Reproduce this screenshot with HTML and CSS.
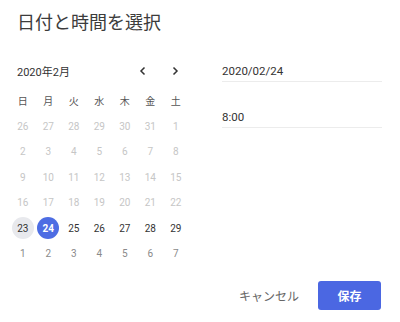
FILE: index.html
```html
<!DOCTYPE html>
<html>
<head>
  <meta charset="UTF-8">
  <title>日付と時間を選択</title>
<link rel="stylesheet" href="styles.css">
</head>
<body>
  <div class="dialog">
    <h1 class="title">日付と時間を選択</h1>

    <div class="main">
      <!-- カレンダー -->
      <div class="calendar">
        <div class="cal-head">
          <span class="month">2020年2月</span>
          <div class="nav">
            <button class="nav-btn" aria-label="前の月">
              <svg width="8" height="10" viewBox="0 0 8 10"><path d="M5.5 1.5 2 5l3.5 3.5" fill="none" stroke="#333" stroke-width="1.5"/></svg>
            </button>
            <button class="nav-btn" aria-label="次の月">
              <svg width="8" height="10" viewBox="0 0 8 10"><path d="M2.5 1.5 6 5 2.5 8.5" fill="none" stroke="#333" stroke-width="1.5"/></svg>
            </button>
          </div>
        </div>
        <div class="grid" id="grid">
          <span class="wd">日</span><span class="wd">月</span><span class="wd">火</span><span class="wd">水</span><span class="wd">木</span><span class="wd">金</span><span class="wd">土</span>
        </div>
      </div>

      <!-- 入力欄 -->
      <div class="fields">
        <div class="field">2020/02/24</div>
        <div class="field">8:00</div>
      </div>
    </div>

    <div class="footer">
      <button class="btn-cancel">キャンセル</button>
      <button class="btn-save">保存</button>
    </div>
  </div>

<script>
  const grid = document.getElementById('grid');
  // 表示する日付（前月・当月・翌月）
  const days = [
    [26, 'off'], [27, 'off'], [28, 'off'], [29, 'off'], [30, 'off'], [31, 'off'], [1, 'off'],
    [2, 'off'], [3, 'off'], [4, 'off'], [5, 'off'], [6, 'off'], [7, 'off'], [8, 'off'],
    [9, 'off'], [10, 'off'], [11, 'off'], [12, 'off'], [13, 'off'], [14, 'off'], [15, 'off'],
    [16, 'off'], [17, 'off'], [18, 'off'], [19, 'off'], [20, 'off'], [21, 'off'], [22, 'off'],
    [23, 'today'], [24, 'selected'], [25, ''], [26, ''], [27, ''], [28, ''], [29, ''],
    [1, 'next'], [2, 'next'], [3, 'next'], [4, 'next'], [5, 'next'], [6, 'next'], [7, 'next']
  ];
  days.forEach(([d, cls]) => {
    const cell = document.createElement('span');
    cell.className = 'day ' + cls;
    const inner = document.createElement('span');
    inner.textContent = d;
    cell.appendChild(inner);
    grid.appendChild(cell);
  });
</script>
</body>
</html>
```

FILE: styles.css
```css
body, html {
  margin: 0;
  padding: 0;
  background: white;
  font-family: Roboto, "Noto Sans CJK JP", sans-serif;
  color: #333;
}
.dialog {
  padding: 9px 18px 0 10px;
}
.title {
  margin: 0 0 21px 7px;
  font-size: 18px;
  font-weight: 400;
  line-height: 28px;
  color: #3c3c3c;
}
.main {
  display: flex;
  gap: 33px;
}
.calendar {
  width: 179px;
}
.cal-head {
  display: flex;
  align-items: center;
  justify-content: space-between;
  height: 26px;
  margin-bottom: 4px;
}
.month {
  padding-left: 7px;
  font-size: 11px;
  color: #333;
}
.nav {
  display: flex;
  gap: 22px;
  margin-right: 9px;
}
.nav-btn {
  padding: 0;
  border: none;
  background: none;
  width: 10px;
  height: 12px;
  display: flex;
  align-items: center;
  justify-content: center;
}
.grid {
  display: grid;
  grid-template-columns: repeat(7, 25.5px);
  grid-auto-rows: 25.5px;
}
.wd, .day {
  display: flex;
  align-items: center;
  justify-content: center;
  font-size: 10px;
}
.wd {
  color: #555;
}
.day span {
  width: 22px;
  height: 22px;
  border-radius: 50%;
  display: flex;
  align-items: center;
  justify-content: center;
}
.day.off {
  color: #c6c6c6;
}
.day.next {
  color: #8a8a8a;
}
.day.today span {
  background: #e8e9ed;
}
.day.selected span {
  background: #4d6de3;
  color: white;
  font-weight: bold;
}
.fields {
  width: 160px;
}
.field {
  height: 23px;
  line-height: 26px;
  font-size: 11.5px;
  color: #333;
  border-bottom: 1px solid #ececec;
  margin-top: 0;
}
.field + .field {
  margin-top: 22px;
}
.footer {
  display: flex;
  justify-content: flex-end;
  align-items: center;
  gap: 19px;
  margin-top: 14px;
  margin-right: 1px;
}
.btn-cancel {
  border: none;
  background: none;
  padding: 0;
  font-family: inherit;
  font-size: 12px;
  color: #666;
}
.btn-save {
  width: 63px;
  height: 29px;
  border: none;
  border-radius: 3px;
  background: #4b67e2;
  color: white;
  font-family: inherit;
  font-size: 12px;
  font-weight: bold;
}
```
